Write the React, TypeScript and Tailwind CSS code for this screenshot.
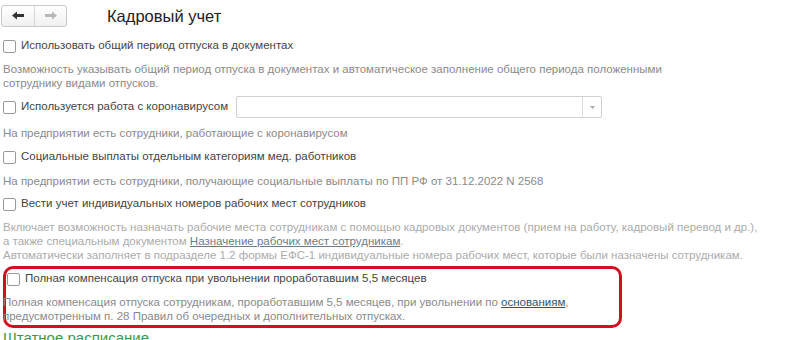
import React from "react";

function Arrow({ dir, color }: { dir: "l" | "r"; color: string }) {
  return (
    <svg width="12" height="9" viewBox="0 0 12 9" style={{ transform: dir === "r" ? "scaleX(-1)" : undefined }}>
      <path d="M0 4.5 L5 0.5 L5 3 L12 3 L12 6 L5 6 L5 8.5 Z" fill={color} />
    </svg>
  );
}

function Box() {
  return <span className="inline-block w-[13px] h-[13px] border border-[#9a9a9a] bg-white rounded-[2px] shrink-0" />;
}

function CheckRow({ label, children }: { label: string; children?: React.ReactNode }) {
  return (
    <div className="flex items-center h-[22px] pl-[3px]">
      <Box />
      <span className="ml-[5px] text-[11.5px] text-[#444] whitespace-nowrap">{label}</span>
      {children}
    </div>
  );
}

export default function App() {
  return (
    <div className="w-[800px] h-[340px] overflow-hidden bg-white relative" style={{ fontFamily: '"Liberation Sans", Arial, sans-serif' }}>
      <div className="flex items-center h-[32px]">
        <div className="ml-[1px] mt-[-1px] flex h-[22px] w-[66px] border border-[#c8c8c8] rounded-[3px] bg-gradient-to-b from-white to-[#f0f0f0]">
          <div className="w-[33px] flex items-center justify-center border-r border-[#d6d6d6]">
            <Arrow dir="l" color="#333" />
          </div>
          <div className="flex-1 flex items-center justify-center">
            <Arrow dir="r" color="#b8b8b8" />
          </div>
        </div>
        <div className="ml-[40px] text-[16.5px] text-[#222] leading-none">Кадровый учет</div>
      </div>

      <div className="mt-[3px]">
        <CheckRow label="Использовать общий период отпуска в документах" />
      </div>
      <div className="mt-[5px] pl-[3px] text-[11.5px] leading-[14px] text-[#8a8a8a] whitespace-nowrap">
        <div>Возможность указывать общий период отпуска в документах и автоматическое заполнение общего периода положенными</div>
        <div>сотруднику видами отпусков.</div>
      </div>

      <div className="mt-[6px]">
        <CheckRow label="Используется работа с коронавирусом">
          <div className="ml-[8px] flex h-[22px] w-[366px] border border-[#d0d0d0] rounded-[2px] bg-white">
            <div className="flex-1" />
            <div className="w-[19px] border-l border-[#dcdcdc] flex items-center justify-center">
              <svg width="5" height="3" viewBox="0 0 5 3"><path d="M0 0 L5 0 L2.5 3 Z" fill="#aaa" /></svg>
            </div>
          </div>
        </CheckRow>
      </div>
      <div className="mt-[8px] pl-[3px] text-[11.5px] leading-[14px] text-[#8a8a8a] whitespace-nowrap">
        На предприятии есть сотрудники, работающие с коронавирусом
      </div>

      <div className="mt-[6px]">
        <CheckRow label="Социальные выплаты отдельным категориям мед. работников" />
      </div>
      <div className="mt-[6px] pl-[3px] text-[11.5px] leading-[14px] text-[#8a8a8a] whitespace-nowrap">
        На предприятии есть сотрудники, получающие социальные выплаты по ПП РФ от 31.12.2022 N 2568
      </div>

      <div className="mt-[5px]">
        <CheckRow label="Вести учет индивидуальных номеров рабочих мест сотрудников" />
      </div>
      <div className="mt-[5px] pl-[3px] text-[11.5px] leading-[14px] text-[#ababab] whitespace-nowrap">
        <div>Включает возможность назначать рабочие места сотрудникам с помощью кадровых документов (прием на работу, кадровый перевод и др.),</div>
        <div>
          а также специальным документом <span className="underline text-[#6b7c8c]">Назначение рабочих мест сотрудникам</span>.
        </div>
        <div>Автоматически заполняет в подразделе 1.2 формы ЕФС-1 индивидуальные номера рабочих мест, которые были назначены сотрудникам.</div>
      </div>

      <div className="mt-[4px] ml-[3px] w-[619px] h-[62px] border-[3px] border-[#d0101f] rounded-[10px]">
        <div className="mt-[-1px] -ml-[2px]">
          <CheckRow label="Полная компенсация отпуска при увольнении проработавшим 5,5 месяцев" />
        </div>
        <div className="mt-[5px] -ml-[3px] text-[11.5px] leading-[14px] text-[#8a8a8a] whitespace-nowrap">
          <div>
            Полная компенсация отпуска сотрудникам, проработавшим 5,5 месяцев, при увольнении по{" "}
            <span className="underline text-[#2b5478]">основаниям</span>,
          </div>
          <div>предусмотренным п. 28 Правил об очередных и дополнительных отпусках.</div>
        </div>
      </div>
      <div className="mt-[2px] pl-[3px] text-[15px] leading-[16px] text-[#3c9a3c] whitespace-nowrap">Штатное расписание</div>
    </div>
  );
}
